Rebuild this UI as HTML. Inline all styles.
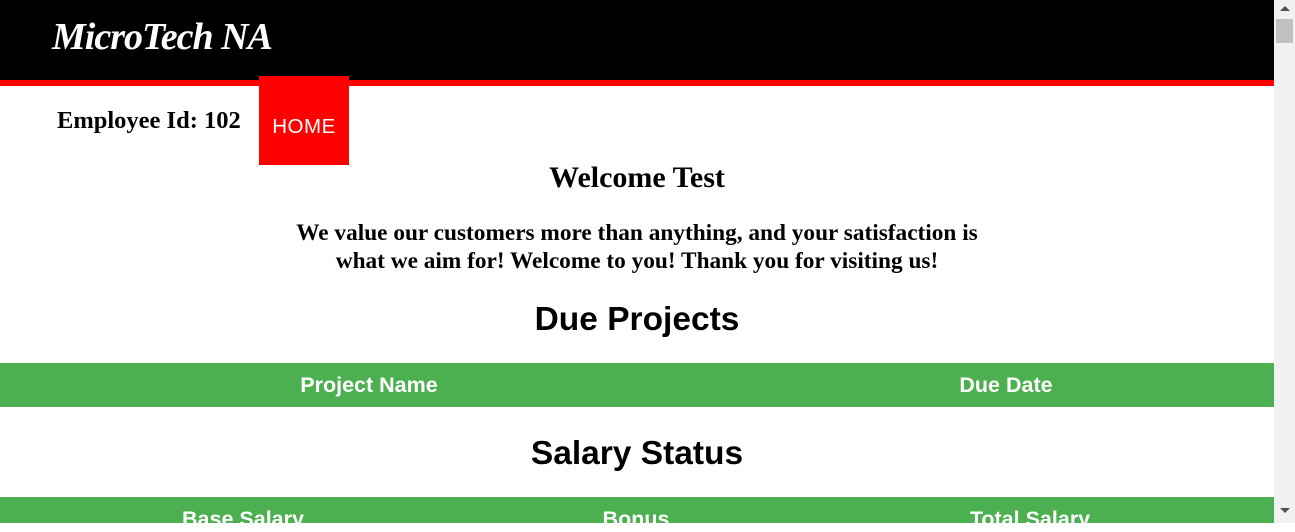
<!DOCTYPE html>
<html><head><meta charset="utf-8"><style>
*{margin:0;padding:0;box-sizing:border-box}
body{width:1295px;height:523px;overflow:hidden;position:relative;background:#fff;font-family:"Liberation Sans",sans-serif}
.a{position:absolute;white-space:nowrap}
.c{transform:translateX(-50%)}
.hdr{position:absolute;left:0;top:0;width:1274px;height:80px;background:#000}
.red{position:absolute;left:0;top:80px;width:1274px;height:6px;background:#f00}
.logo{left:52px;top:15px;color:#fff;font-family:"Liberation Serif",serif;font-style:italic;font-weight:bold;font-size:38px;letter-spacing:-1px}
.home{position:absolute;left:259px;top:76px;width:90px;height:89px;background:#f00;color:#fff;font-size:20.5px;text-align:center;line-height:101px;letter-spacing:.5px}
.serif{font-family:"Liberation Serif",serif;font-weight:bold;color:#000}
.h2{font-weight:bold;font-size:33.5px;color:#000}
.g{position:absolute;left:0;width:1274px;background:#4caf50}
.th{color:#fff;font-weight:bold;font-size:21.5px}
.sb{position:absolute;left:1274px;top:0;width:21px;height:523px;background:#f1f1f1}
</style></head><body>
<div class="hdr"></div><div class="red"></div>
<div class="a logo">MicroTech NA</div>
<div class="a serif" style="left:57px;top:107px;font-size:24.5px">Employee Id: 102</div>
<div class="home">HOME</div>
<div class="a serif c" style="left:637px;top:161px;font-size:30px">Welcome Test</div>
<div class="a serif c" style="left:637px;top:219px;font-size:23.3px;text-align:center;line-height:28px">We value our customers more than anything, and your satisfaction is<br>what we aim for! Welcome to you! Thank you for visiting us!</div>
<div class="a h2 c" style="left:637px;top:301px">Due Projects</div>
<div class="g" style="top:363px;height:44px"></div>
<div class="a th c" style="left:369px;top:373px">Project Name</div>
<div class="a th c" style="left:1006px;top:373px">Due Date</div>
<div class="a h2 c" style="left:637px;top:435px">Salary Status</div>
<div class="g" style="top:497px;height:26px"></div>
<div class="a th c" style="left:243px;top:507px">Base Salary</div>
<div class="a th c" style="left:636px;top:507px">Bonus</div>
<div class="a th c" style="left:1030px;top:507px">Total Salary</div>
<div class="sb">
<div style="position:absolute;left:2px;top:19px;width:17px;height:24px;background:#c1c1c1"></div>
<div style="position:absolute;left:6px;top:6px;width:0;height:0;border-left:5px solid transparent;border-right:5px solid transparent;border-bottom:5px solid #505050"></div>
<div style="position:absolute;left:6px;top:508px;width:0;height:0;border-left:5px solid transparent;border-right:5px solid transparent;border-top:5px solid #505050"></div>
</div>
</body></html>
